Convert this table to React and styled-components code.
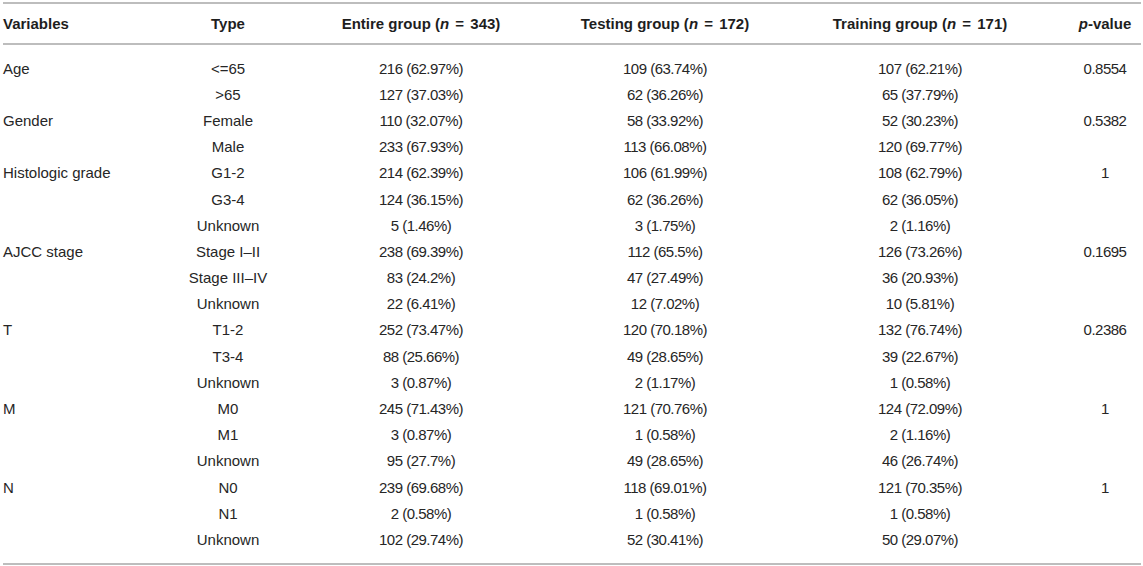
import React from "react";
import styled, { createGlobalStyle } from "styled-components";

const GlobalStyle = createGlobalStyle`
  html, body {
    margin: 0;
    padding: 0;
    background: #ffffff;
  }
  body {
    font-family: "Liberation Sans", Arial, Helvetica, sans-serif;
    color: #222222;
  }
`;

const COLS = "170px 110px 276px 212px 298px 72px";

const Page = styled.div`
  padding: 2px 3px 0 3px;
`;

const Table = styled.div`
  width: 1138px;
  border-top: 2px solid #bdbdbd;
  border-bottom: 2px solid #bdbdbd;
`;

const HeadRow = styled.div`
  display: grid;
  grid-template-columns: ${COLS};
  height: 39px;
  align-items: center;
  border-bottom: 2px solid #bdbdbd;
  font-weight: bold;
  font-size: 15px;
  color: #1e1e1e;
`;

const Body = styled.div`
  padding: 10px 0 10px 0;
`;

const Row = styled.div`
  display: grid;
  grid-template-columns: ${COLS};
  height: 26.2px;
  align-items: center;
  font-size: 15px;
  color: #262626;
`;

const Cell = styled.div`
  text-align: ${(p) => (p.$left ? "left" : "center")};
  letter-spacing: ${(p) => (p.$num ? "-0.5px" : "0")};
  white-space: nowrap;
`;

const Ital = styled.i`
  font-style: italic;
`;

const Eq = styled.span`
  margin: 0 2px;
`;

const rows = [
  ["Age", "<=65", "216 (62.97%)", "109 (63.74%)", "107 (62.21%)", "0.8554"],
  ["", ">65", "127 (37.03%)", "62 (36.26%)", "65 (37.79%)", ""],
  ["Gender", "Female", "110 (32.07%)", "58 (33.92%)", "52 (30.23%)", "0.5382"],
  ["", "Male", "233 (67.93%)", "113 (66.08%)", "120 (69.77%)", ""],
  ["Histologic grade", "G1-2", "214 (62.39%)", "106 (61.99%)", "108 (62.79%)", "1"],
  ["", "G3-4", "124 (36.15%)", "62 (36.26%)", "62 (36.05%)", ""],
  ["", "Unknown", "5 (1.46%)", "3 (1.75%)", "2 (1.16%)", ""],
  ["AJCC stage", "Stage I\u2013II", "238 (69.39%)", "112 (65.5%)", "126 (73.26%)", "0.1695"],
  ["", "Stage III\u2013IV", "83 (24.2%)", "47 (27.49%)", "36 (20.93%)", ""],
  ["", "Unknown", "22 (6.41%)", "12 (7.02%)", "10 (5.81%)", ""],
  ["T", "T1-2", "252 (73.47%)", "120 (70.18%)", "132 (76.74%)", "0.2386"],
  ["", "T3-4", "88 (25.66%)", "49 (28.65%)", "39 (22.67%)", ""],
  ["", "Unknown", "3 (0.87%)", "2 (1.17%)", "1 (0.58%)", ""],
  ["M", "M0", "245 (71.43%)", "121 (70.76%)", "124 (72.09%)", "1"],
  ["", "M1", "3 (0.87%)", "1 (0.58%)", "2 (1.16%)", ""],
  ["", "Unknown", "95 (27.7%)", "49 (28.65%)", "46 (26.74%)", ""],
  ["N", "N0", "239 (69.68%)", "118 (69.01%)", "121 (70.35%)", "1"],
  ["", "N1", "2 (0.58%)", "1 (0.58%)", "1 (0.58%)", ""],
  ["", "Unknown", "102 (29.74%)", "52 (30.41%)", "50 (29.07%)", ""],
];

function GroupHead({ label, n }) {
  return (
    <Cell>
      {label} (<Ital>n</Ital><Eq> = </Eq>{n})
    </Cell>
  );
}

export default function App() {
  return (
    <Page>
      <GlobalStyle />
      <Table>
        <HeadRow>
          <Cell $left>Variables</Cell>
          <Cell>Type</Cell>
          <GroupHead label="Entire group" n="343" />
          <GroupHead label="Testing group" n="172" />
          <GroupHead label="Training group" n="171" />
          <Cell><Ital>p</Ital>-value</Cell>
        </HeadRow>
        <Body>
          {rows.map((r, i) => (
            <Row key={i}>
              {r.map((c, j) => (
                <Cell key={j} $left={j === 0} $num={j >= 2}>{c}</Cell>
              ))}
            </Row>
          ))}
        </Body>
      </Table>
    </Page>
  );
}
